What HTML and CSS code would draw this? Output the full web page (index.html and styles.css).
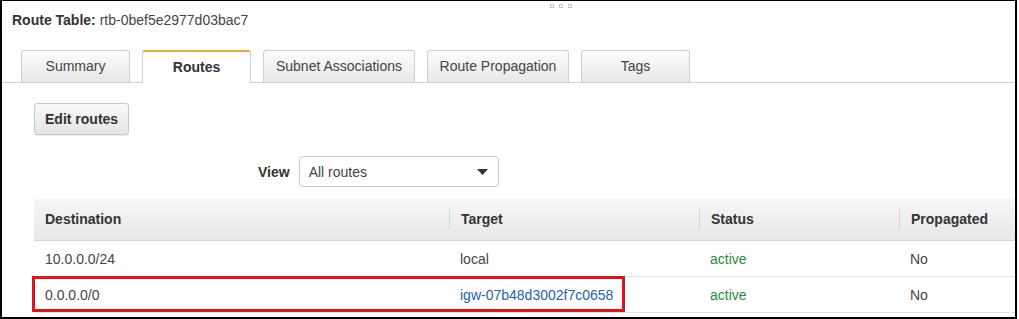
FILE: index.html
```html
<!DOCTYPE html>
<html lang="en">
<head>
    <meta charset="UTF-8">
    <meta name="viewport" content="width=device-width, initial-scale=1.0">
    <title>Route Table</title>
    <link rel="stylesheet" href="styles.css">
</head>
<body>

    <div class="frame">
        <div class="handle"><span></span><span></span><span></span></div>
        <h1 class="title"><b>Route Table:</b> rtb-0bef5e2977d03bac7</h1>

        <div class="tabs">
            <div class="tab tab-summary">Summary</div>
            <div class="tab tab-routes active">Routes</div>
            <div class="tab tab-subnets">Subnet Associations</div>
            <div class="tab tab-propagation">Route Propagation</div>
            <div class="tab tab-tags">Tags</div>
        </div>

        <div class="panel">
            <button class="btn">Edit routes</button>

            <div class="filter">
                <label class="filter-label">View</label>
                <div class="select">
                    <span>All routes</span>
                    <svg class="caret" width="11" height="6" viewBox="0 0 11 6"><polygon points="0,0 11,0 5.5,6" fill="#333"/></svg>
                </div>
            </div>

            <div class="routes">
                <table class="routes-table">
                    <colgroup>
                        <col style="width: 415px">
                        <col style="width: 250px">
                        <col style="width: 200px">
                        <col>
                    </colgroup>
                    <thead>
                        <tr>
                            <th><div class="th-cell first">Destination</div></th>
                            <th><div class="th-cell">Target</div></th>
                            <th><div class="th-cell">Status</div></th>
                            <th><div class="th-cell">Propagated</div></th>
                        </tr>
                    </thead>
                    <tbody>
                        <tr>
                            <td>10.0.0.0/24</td>
                            <td>local</td>
                            <td class="status">active</td>
                            <td>No</td>
                        </tr>
                        <tr>
                            <td>0.0.0.0/0</td>
                            <td><a class="link" href="#">igw-07b48d3002f7c0658</a></td>
                            <td class="status">active</td>
                            <td>No</td>
                        </tr>
                    </tbody>
                </table>
                <div class="highlight"></div>
            </div>
        </div>
    </div>

</body>
</html>
```

FILE: styles.css
```css
* {
    margin: 0;
    padding: 0;
    box-sizing: border-box;
}
body {
    font-family: "Liberation Sans", Arial, sans-serif;
    font-size: 14px;
    color: #444;
    background-color: #fff;
}
.frame {
    width: 1017px;
    height: 319px;
    border: 2px solid #000;
    border-top-width: 1px;
    overflow: hidden;
}
.handle {
    display: flex;
    gap: 5px;
    height: 4px;
    margin-top: 3px;
    padding-left: 548px;
}
.handle span {
    width: 4px;
    height: 4px;
    border: 1px solid #c4c4c4;
}
.title {
    margin-top: 4px;
    padding-left: 10px;
    font-size: 14px;
    font-weight: normal;
    line-height: 16px;
    color: #444;
}
.title b {
    color: #333;
}

/* tabs */
.tabs {
    display: flex;
    align-items: flex-end;
    gap: 12px;
    margin-top: 22px;
    padding-left: 19px;
    border-bottom: 1px solid #cfcfcf;
}
.tab {
    height: 32px;
    border: 1px solid #cfcfcf;
    border-bottom: none;
    border-radius: 3px 3px 0 0;
    background: linear-gradient(#fbfbfb, #e8e8e8);
    color: #444;
    text-align: center;
    line-height: 31px;
}
.tab-summary { width: 109px; }
.tab-routes { width: 109px; }
.tab-subnets { width: 152px; }
.tab-propagation { width: 142px; }
.tab-tags { width: 109px; }
.tab.active {
    height: 33px;
    margin-bottom: -1px;
    background: #fff;
    border-top: 2px solid #f0a535;
    font-weight: bold;
    color: #333;
    line-height: 30px;
}

/* panel */
.panel {
    padding-left: 32px;
}
.btn {
    display: block;
    height: 32px;
    margin-top: 20px;
    padding: 0 10px;
    border: 1px solid #c8c8c8;
    border-radius: 3px;
    background: linear-gradient(#fafafa, #e4e4e4);
    box-shadow: 0 1px 1px rgba(0, 0, 0, 0.08);
    font-family: inherit;
    font-size: 14px;
    font-weight: bold;
    color: #333;
}
.filter {
    display: flex;
    align-items: center;
    gap: 9px;
    margin-top: 21px;
    margin-left: 224px;
}
.filter-label {
    font-weight: bold;
    color: #333;
}
.select {
    display: flex;
    align-items: center;
    width: 200px;
    height: 31px;
    padding: 0 10px 0 9px;
    border: 1px solid #c8c8c8;
    border-radius: 4px;
    background: #fff;
    color: #444;
}
.caret {
    margin-left: auto;
}

/* routes table */
.routes {
    position: relative;
    margin-top: 12px;
}
.routes-table {
    width: 981px;
    table-layout: fixed;
    border-collapse: collapse;
}
.routes-table th {
    padding: 10px 0 11px;
    background: linear-gradient(#f6f6f6, #e8e8e8);
    border-bottom: 1px solid #d6d6d6;
    text-align: left;
    font-weight: bold;
    color: #333;
}
.th-cell {
    line-height: 20px;
    padding-left: 11px;
    border-left: 1px solid #d3d3d3;
}
.th-cell.first {
    border-left: none;
}
.routes-table td {
    padding: 10px 0 9px 11px;
    line-height: 16px;
    border-bottom: 1px solid #e4e4e4;
    white-space: nowrap;
}
.status {
    color: #2b8a3e;
}
.link {
    color: #2462b0;
    text-decoration: none;
}
.highlight {
    position: absolute;
    top: 77px;
    left: -2px;
    width: 593px;
    height: 36px;
    border: 3px solid #e4111b;
}
```
